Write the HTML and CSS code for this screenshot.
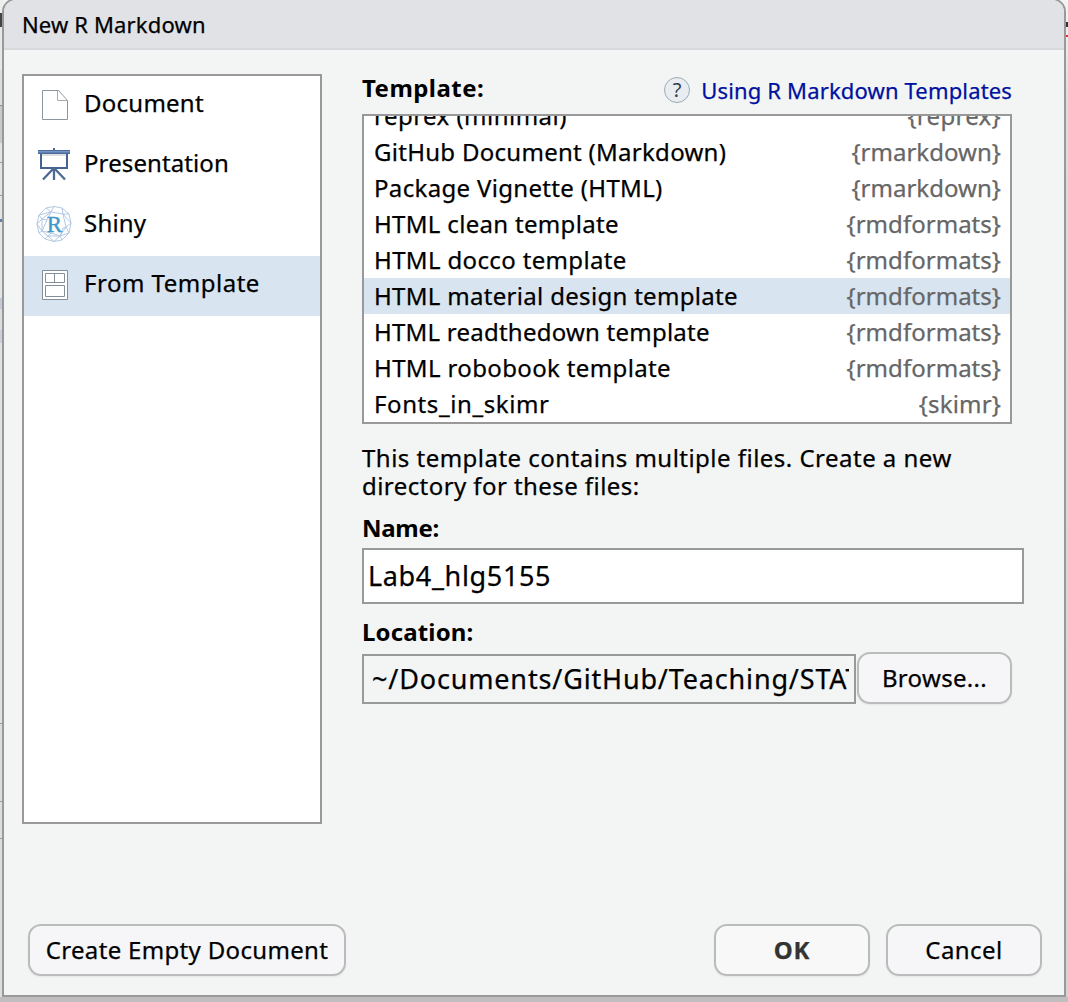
FILE: index.html
```html
<!DOCTYPE html>
<html lang="en">
<head>
<meta charset="utf-8">
<title>New R Markdown</title>
<link rel="stylesheet" href="styles.css">
</head>
<body>
<div class="backdrop">
<main class="dialog">
  <header class="titlebar"><span class="t-title">New R Markdown</span></header>
  <div class="content">
    <nav class="kinds">
      <div class="kind">
        <svg class="icon" width="40" height="40" viewBox="0 0 40 40"><path d="M8.500 6.500H24.500L33.500 16.500V35.500H8.500Z" fill="#fff" stroke="#8b969f"/><path d="M23.500 7V16.500H33" fill="#fff" stroke="#a5adb4"/></svg>
        <span class="t-document">Document</span>
      </div>
      <div class="kind">
        <svg class="icon" width="40" height="40" viewBox="0 0 40 40"><path d="M19 4h2v4h-2z" fill="#4d6a94"/><path d="M7 9H33V24H7Z" fill="#fff" stroke="#45638f" stroke-width="2"/><path d="M8 10h24v2H8z" fill="#dedede"/><path d="M4 6h32v4H4z" fill="#4c6b9c"/><path d="M4 7h32v1.500H4z" fill="#7396c6"/><path d="M20 24V36M19 25L9 35.500M21 25L31 35.500" fill="none" stroke="#4d6a94" stroke-width="2.300"/></svg>
        <span class="t-presentation">Presentation</span>
      </div>
      <div class="kind">
        <svg class="icon" width="40" height="40" viewBox="0 0 40 40"><g fill="none" stroke="#b3c9e3" stroke-width="1"><path d="M20 2.500L28 4L35 10L37 19L35 29L28 36L20 37.500L11 35L5 29L3 20L5 11L12 4Z"/><path d="M20 2.500L17 8L29 10L28 4M12 4L17 8L8 15L5 11L17 8M8 15L3 20L8 27L5 29M8 27L14 32L11 35M14 32L20 37.500L26 32L28 36M26 32L35 29L32 23L26 32M32 23L37 19L29 10L35 10M29 10L32 23M8 15L8 27M14 32H26M17 8L13 16L8 15M13 16L8 27L17 29L14 32M17 29L26 32L29 24L32 23"/></g><text x="20.500" y="28" text-anchor="middle" class="r-mark">R</text></svg>
        <span class="t-shiny">Shiny</span>
      </div>
      <div class="kind selected">
        <svg class="icon" width="40" height="40" viewBox="0 0 40 40"><g fill="#fff" stroke="#858f9a"><path d="M8.500 6.500H33.500V35.500H8.500Z"/><path d="M11.500 9.500H30.500V18.500H11.500ZM20.500 9.500V18.500M11.500 21.500H30.500V32.500H11.500Z"/></g></svg>
        <span class="t-from">From Template</span>
      </div>
    </nav>
    <section class="details">
      <div class="heading">
        <b class="t-template">Template:</b>
        <a class="help"><svg width="28" height="28" viewBox="0 0 28 28"><circle cx="14" cy="14" r="12.500" fill="#e9edf1" stroke="#9aabb8"/><text x="14" y="21" text-anchor="middle" class="question">?</text></svg><span class="t-help">Using R Markdown Templates</span></a>
      </div>
      <div class="templates">
        <div class="row first"><span class="t-r0">reprex (minimal)</span><i class="t-p0">{reprex}</i></div>
        <div class="row"><span class="t-r1">GitHub Document (Markdown)</span><i class="t-p1">{rmarkdown}</i></div>
        <div class="row"><span class="t-r2">Package Vignette (HTML)</span><i class="t-p1">{rmarkdown}</i></div>
        <div class="row"><span class="t-r3">HTML clean template</span><i class="t-p2">{rmdformats}</i></div>
        <div class="row"><span class="t-r4">HTML docco template</span><i class="t-p2">{rmdformats}</i></div>
        <div class="row selected"><span class="t-r5">HTML material design template</span><i class="t-p2">{rmdformats}</i></div>
        <div class="row"><span class="t-r6">HTML readthedown template</span><i class="t-p2">{rmdformats}</i></div>
        <div class="row"><span class="t-r7">HTML robobook template</span><i class="t-p2">{rmdformats}</i></div>
        <div class="row"><span class="t-r8">Fonts_in_skimr</span><i class="t-p3">{skimr}</i></div>
      </div>
      <p class="note"><span class="t-n1">This template contains multiple files. Create a new</span><br><span class="t-n2">directory for these files:</span></p>
      <b class="label t-name">Name:</b>
      <div class="field name"><span class="t-lab">Lab4_hlg5155</span></div>
      <b class="label location t-location">Location:</b>
      <div class="picker">
        <div class="field path"><div class="clip"><span class="t-path">~/Documents/GitHub/Teaching/STAT</span></div></div>
        <div class="button browse"><span class="t-browse">Browse...</span></div>
      </div>
    </section>
  </div>
  <footer class="actions">
    <div class="button create"><span class="t-create">Create Empty Document</span></div>
    <div class="button ok"><span class="t-ok">OK</span></div>
    <div class="button"><span class="t-cancel">Cancel</span></div>
  </footer>
</main>
</div>
</body>
</html>
```
FILE: styles.css
```css
* { box-sizing: border-box; }
body { margin: 0; font: 24px/36px "Noto Sans", "Open Sans", sans-serif; color: #000; }
span, b, i { white-space: nowrap; }
span, i { -webkit-text-stroke: .25px currentColor; }
i { font-style: normal; }
.backdrop {
  display: grid; align-content: start;
  width: 1068px; height: 1002px; overflow: hidden; padding: 0 2px;
  background:
    linear-gradient(#0000 997px, #c0bebf 997px),
    linear-gradient(#eee 0 13px, #444 13px 27px, #e7e7e5 27px 70px, #ddd 70px 105px, #888 105px 106px, #c8c9cd 106px 143px, #e3e3e3 143px 162px, #999 162px 163px, #e3e3e3 163px 195px, #999 195px 196px, #e4e4e4 196px 219px, #607da5 219px 222px, #e4e4e4 222px 298px, #c1cbd8 298px 309px, #ddd 309px 330px, #c9d0da 330px 343px, #e2e2e2 343px 723px, #999 723px 724px, #ddd 724px 801px, #999 801px 802px, #ddd 802px 838px, #999 838px 839px, #ddd 839px) 0 0 / 4px 100% no-repeat,
    linear-gradient(#0000 22px, #333 22px 27px, #0000 27px 35px, #d33 35px 37px, #0000 37px),
    linear-gradient(#f4f4f4, #ddd 100px, #d4d4d4);
}
.dialog {
  height: 999px; margin-top: -2px; display: flex; flex-direction: column;
  border: 2px solid #999; border-radius: 14px 14px 0 0; background: #f3f5f4; overflow: hidden;
}
.titlebar { height: 50px; padding: 6px 18px; border-bottom: 2px solid #d7d8dc; background: #e1e2e6; font-size: 22px; }
.content { display: flex; gap: 40px; padding: 24px 18px 0; }
.kinds { width: 300px; height: 750px; border: 2px solid #999; background: #fff; }
.kind { display: flex; align-items: center; height: 60px; padding: 0 10px; gap: 10px; }
.kind span { margin-top: -6px; }
.icon { margin-top: -4px; }
.selected { background: #d8e4f0; }
.r-mark { font: 23px "Liberation Serif", serif; fill: #4298ca; stroke: #4298ca; stroke-width: .4px; }
.question { font: 20px "Noto Sans", sans-serif; fill: #2d3c50; letter-spacing: 0; }
.details { width: 662px; }
.heading { display: flex; justify-content: space-between; width: 650px; height: 40px; margin-top: -4px; }
.heading b { line-height: 36px; }
.help { display: flex; align-items: center; gap: 10px; height: 40px; color: #0010a0; font-size: 22px; }
.help span { margin-top: -1px; }
.templates { width: 650px; height: 310px; margin-top: 4px; border: 2px solid #999; background: #fff; overflow: hidden; }
.row { display: flex; justify-content: space-between; height: 36px; padding: 0 9px 0 10px; }
.row.first { margin-top: -18px; }
.row i { color: #666; }
.note { margin: 20px 0 9px; line-height: 28px; }
.label { display: block; height: 39px; line-height: 38px; }
.label.location { height: 48px; line-height: 55px; }
.field { display: flex; align-items: center; border: 2px solid #999; font-size: 27px; }
.name { height: 56px; padding: 0 4px; background: #fff; }
.picker { display: flex; align-items: flex-start; }
.path { width: 494px; height: 50px; margin: 2px 1px 0 0; padding: 0 5px 0 8px; }
.clip { width: 478px; overflow: hidden; }
.button { display: flex; align-items: center; justify-content: center; width: 156px; height: 52px; border: 2px solid #bbb; border-radius: 13px; background: #f6f6f8; box-shadow: 0 1px 2px #0001; }
.browse { width: 155px; }
.browse span { margin-top: -1px; }
.actions { display: flex; gap: 16px; padding: 100px 22px 0 24px; }
.create { width: 318px; margin-right: auto; }
.ok { background: #f8f8f8; color: #333; font-weight: 700; }

/* tracking per text */
.t-title { letter-spacing: .15px; }
.t-document { letter-spacing: .25px; }
.t-presentation { letter-spacing: .1px; }
.t-shiny { letter-spacing: .2px; }
.t-from { letter-spacing: .5px; }
.t-template { letter-spacing: .45px; }
.t-help { letter-spacing: .15px; }
.t-r0 { letter-spacing: .47px; }
.t-r1 { letter-spacing: .28px; }
.t-r2 { letter-spacing: .33px; }
.t-r3 { letter-spacing: .32px; }
.t-r4 { letter-spacing: .35px; }
.t-r5 { letter-spacing: .31px; }
.t-r6 { letter-spacing: .23px; }
.t-r7 { letter-spacing: .36px; }
.t-r8 { letter-spacing: .6px; }
.t-p0 { letter-spacing: .3px; }
.t-p1, .t-p2 { letter-spacing: .03px; }
.t-p3 { letter-spacing: .15px; }
.t-n1 { letter-spacing: .48px; }
.t-n2 { letter-spacing: .43px; }
.t-name { letter-spacing: -.3px; }
.t-location { letter-spacing: .15px; }
.t-lab { letter-spacing: .65px; }
.t-path { letter-spacing: .84px; }
.t-browse { letter-spacing: .33px; }
.t-create { letter-spacing: .33px; }
.t-ok { letter-spacing: .8px; }
.t-cancel { letter-spacing: .45px; }
```
